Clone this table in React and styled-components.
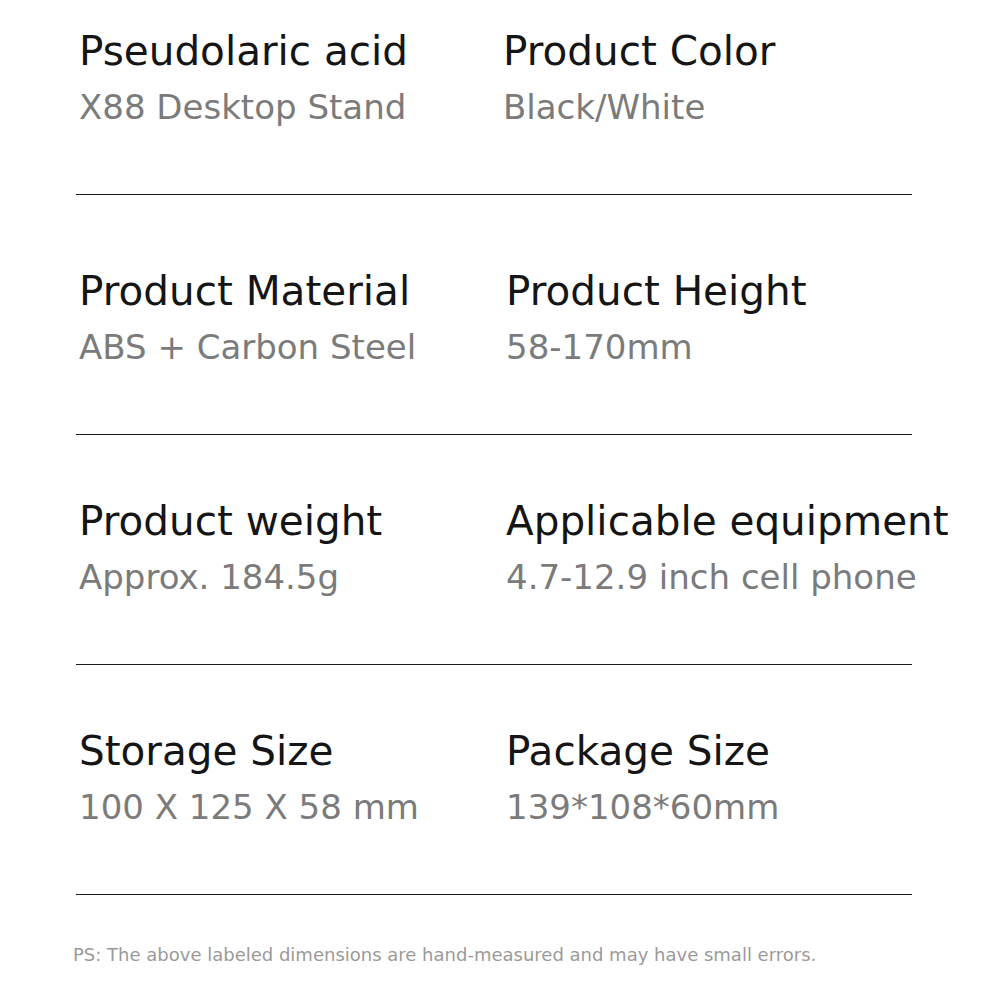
import React from "react";
import styled, { createGlobalStyle } from "styled-components";

const Global = createGlobalStyle`
  html, body { margin: 0; padding: 0; background: #ffffff; }
  body { font-family: "DejaVu Sans", "Liberation Sans", sans-serif; }
`;

const Page = styled.main`
  width: 836px;
  margin-left: 76px;
  display: flex;
  flex-direction: column;
`;

const Row = styled.section`
  display: grid;
  grid-template-columns: ${(p) => p.$split}px 1fr;
  padding-top: ${(p) => p.$top}px;
  padding-bottom: 67px;
  border-bottom: 1px solid #1c1c1c;
`;

const Cell = styled.div`
  display: flex;
  flex-direction: column;
  gap: 12px;
  padding-left: 3px;
  white-space: nowrap;
`;

const Label = styled.div`
  font-size: 40.5px;
  line-height: 48px;
  color: #151515;
`;

const Value = styled.div`
  font-size: 34px;
  line-height: 40px;
  color: #7b7b7b;
`;

const Note = styled.p`
  margin: 49px 0 0 -3px;
  font-size: 18px;
  line-height: 22px;
  color: #9a9a9a;
  white-space: nowrap;
`;

const rows = [
  {
    top: 27,
    split: 424,
    items: [
      ["Pseudolaric acid", "X88 Desktop Stand"],
      ["Product Color", "Black/White"],
    ],
  },
  {
    top: 72,
    split: 427,
    items: [
      ["Product Material", "ABS + Carbon Steel"],
      ["Product Height", "58-170mm"],
    ],
  },
  {
    top: 62,
    split: 427,
    items: [
      ["Product weight", "Approx. 184.5g"],
      ["Applicable equipment", "4.7-12.9 inch cell phone"],
    ],
  },
  {
    top: 62,
    split: 427,
    items: [
      ["Storage Size", "100 X 125 X 58 mm"],
      ["Package Size", "139*108*60mm"],
    ],
  },
];

export default function App() {
  return (
    <>
      <Global />
      <Page>
        {rows.map((row, i) => (
          <Row key={i} $top={row.top} $split={row.split}>
            {row.items.map(([label, value]) => (
              <Cell key={label}>
                <Label>{label}</Label>
                <Value>{value}</Value>
              </Cell>
            ))}
          </Row>
        ))}
        <Note>
          PS: The above labeled dimensions are hand-measured and may have small errors.
        </Note>
      </Page>
    </>
  );
}
